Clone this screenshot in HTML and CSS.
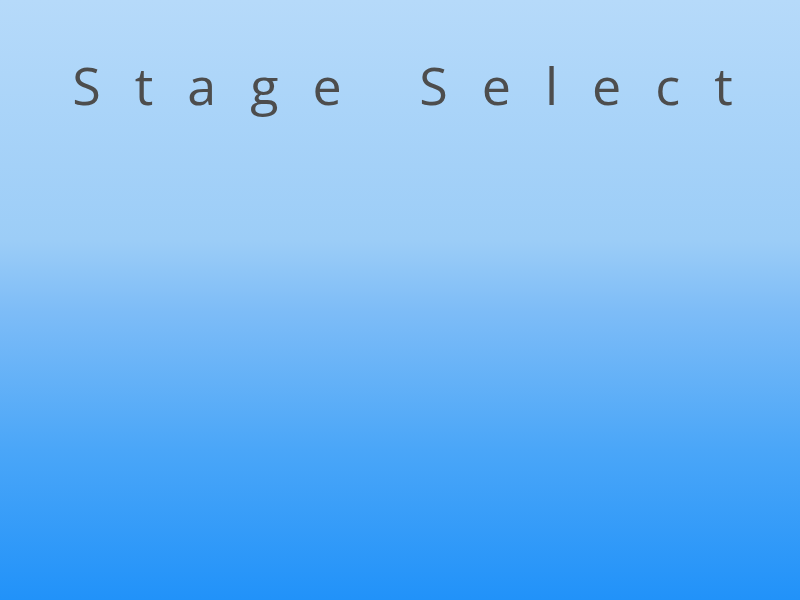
FILE: index.html
```html
<!DOCTYPE html>
<html>
<head>
<meta charset="utf-8">
<link rel="stylesheet" href="styles.css">
</head>
<body>
<div class="screen">
  <h1 class="title">Stage Select</h1>
</div>
</body>
</html>
```
FILE: styles.css
```css
html, body {
  margin: 0;
  padding: 0;
  width: 800px;
  height: 600px;
  overflow: hidden;
}
.screen {
  width: 800px;
  height: 600px;
  background: linear-gradient(to bottom, #b6dafa 0%, #9ccdf7 40%, #7dbcf7 52%, #4aa6f8 75%, #2192f9 100%);
  display: flex;
  flex-direction: column;
  align-items: center;
}
.title {
  margin: 50px 0 0 0;
  font-family: "Open Sans", "Noto Sans", sans-serif;
  font-weight: 400;
  font-size: 52px;
  line-height: 70px;
  letter-spacing: 34px;
  word-spacing: -4px;
  color: #4d4d4d;
  padding-left: 39px;
}
```
